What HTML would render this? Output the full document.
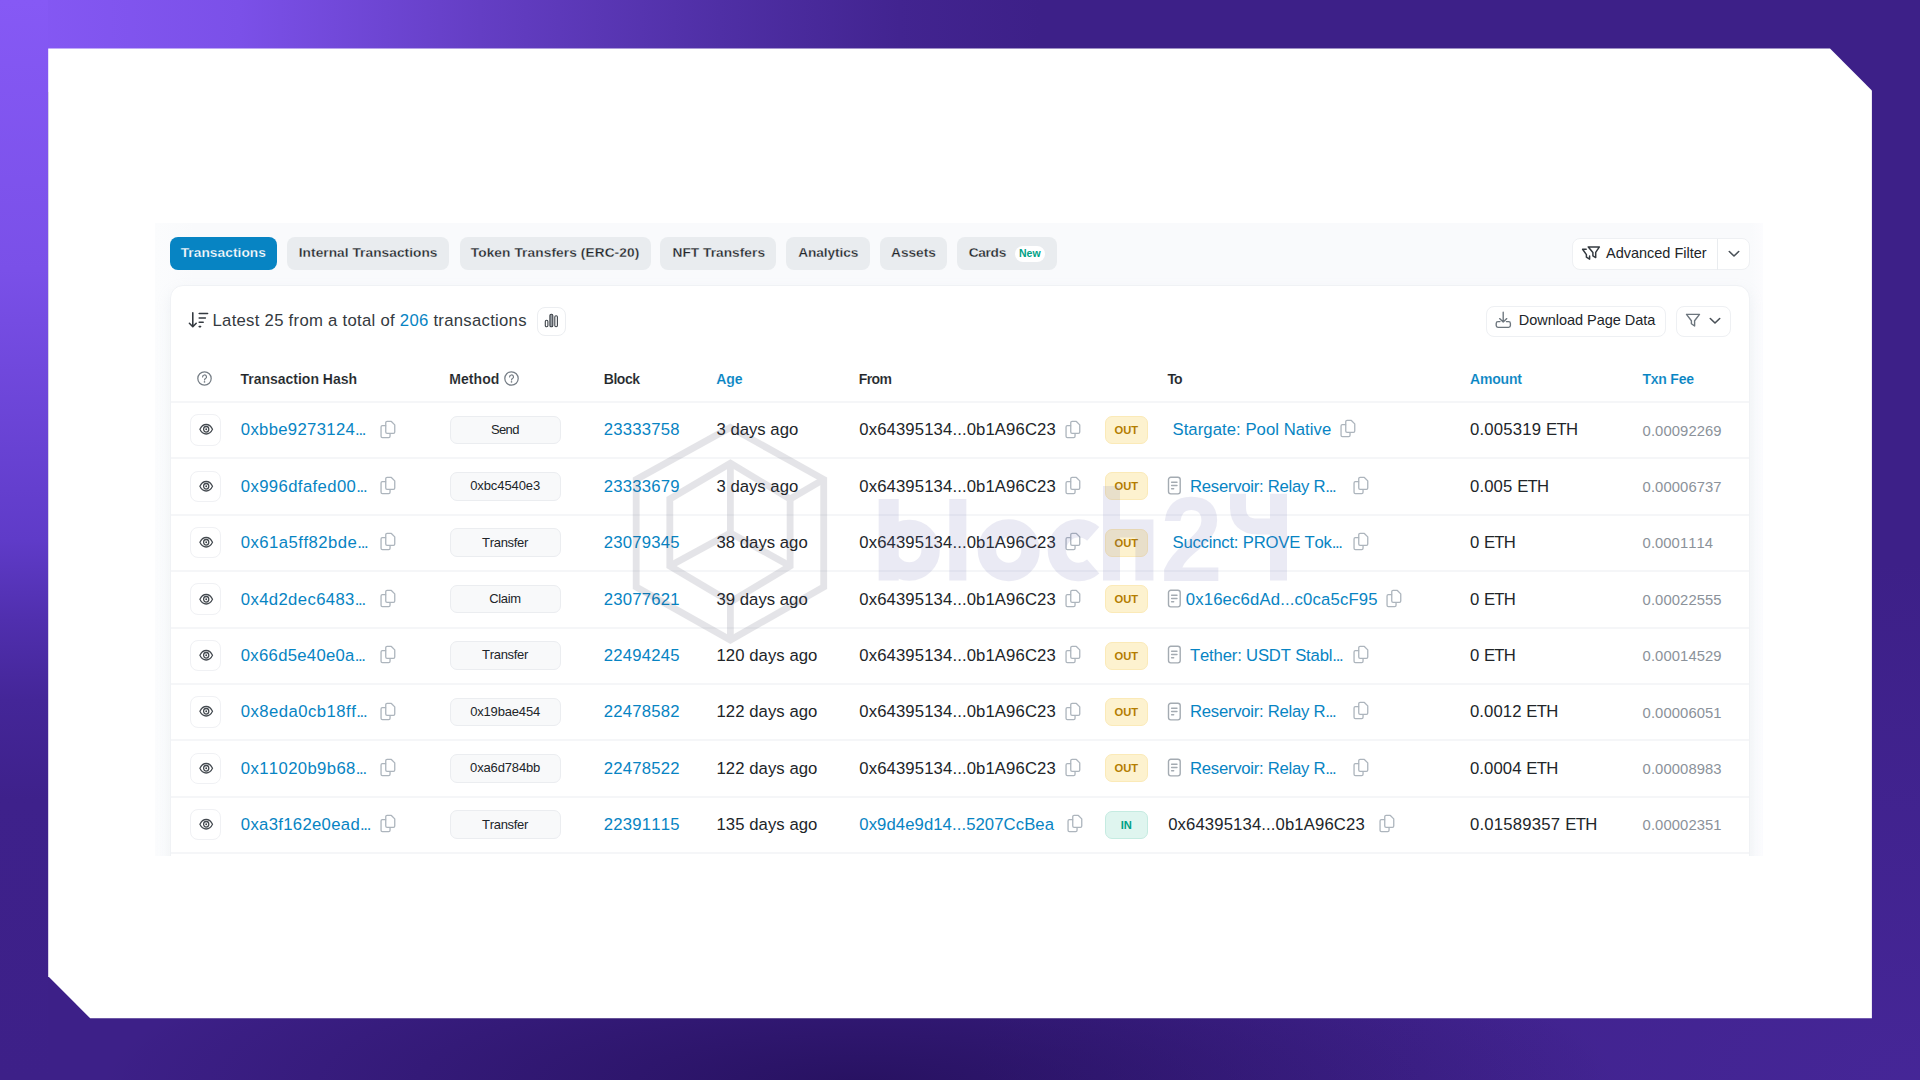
<!DOCTYPE html>
<html lang="en"><head><meta charset="utf-8"><title>Transactions</title>
<style>
*{box-sizing:border-box;margin:0;padding:0}
html,body{width:1920px;height:1080px;overflow:hidden;font-family:"Liberation Sans",sans-serif}
body{position:relative;font-family:"Liberation Sans",sans-serif;color:#212529;
 background:
  radial-gradient(ellipse 760px 170px at 860px 1085px, rgba(22,6,66,.55) 0%, rgba(22,6,66,0) 100%),
  radial-gradient(ellipse 950px 520px at 1920px 1080px, rgba(88,52,185,.30) 0%, rgba(88,52,185,0) 100%),
  linear-gradient(180deg, rgb(134,89,245) 0px, rgb(122,80,232) 270px, rgb(95,59,200) 540px, rgb(80,47,174) 620px, rgb(68,38,152) 700px, rgb(62,33,139) 800px, rgb(61,32,136) 1080px) 0 0 / 48px 1080px no-repeat,
  linear-gradient(90deg, rgb(134,89,245) 0px, rgb(123,80,232) 240px, rgb(100,62,196) 480px, rgb(79,47,165) 720px, rgb(66,36,144) 900px, rgb(61,32,136) 1040px) 0 0 / 1920px 92px no-repeat,
  #3d2088;}
.frame{position:absolute;left:0;top:0;width:1920px;height:1080px;background:#fff;
 clip-path:polygon(48.2px 48.5px,1830px 48.5px,1871.9px 90.4px,1871.9px 1018.3px,90.2px 1018.3px,48.2px 976.3px);}
.shot{position:absolute;left:155px;top:223px;width:1608px;height:633px;background:linear-gradient(90deg,#fbfcfd 0,#f9fafc 40px,#f9fafc 1596px,#fcfcfe 1608px);overflow:hidden}
.abs,.t,.h,.tab,.btn,.cp,.doc,.badge,.meth,.eyeb{position:absolute}
.t{font-size:16.7px;line-height:20px;white-space:nowrap;color:#212529;font-kerning:none}
.el{letter-spacing:-1.3px}.eth{letter-spacing:-.7px}
.a{color:#0784c3}
.h{font-size:14px;line-height:18px;font-weight:700;white-space:nowrap;color:#212529;-webkit-text-stroke:.12px #fff}
.h.a{color:#0784c3}
.tab{top:237.4px;height:32.8px;border-radius:8px;background:#e9ecef;font-size:13.7px;font-weight:700;line-height:33px;white-space:nowrap;color:#212529}
.tab span{position:absolute;top:0}
.tab.on{background:#0784c3;color:#fff}
.card{position:absolute;left:169.7px;top:285px;width:1580.3px;height:640px;background:#fff;border:1px solid #f0f2f5;border-radius:13px;box-shadow:0 6px 14px rgba(189,197,209,.18)}
.sep{position:absolute;left:171px;width:1578px;height:2px;background:#f5f6f8}
.btn{background:#fff;border:1px solid #eef0f3;border-radius:8px}
.bt{position:absolute;font-size:14.5px;line-height:18px;white-space:nowrap;color:#212529}
.cp{fill:none;stroke:#adb5bd;stroke-width:1.3;stroke-linejoin:round;stroke-linecap:round;overflow:visible}
.doc{fill:none;stroke:#a4abb2;stroke-width:1.4;stroke-linecap:round;overflow:visible}
.eyeb{left:189.5px;width:31.5px;height:31.5px;border:1px solid #f0f1f4;border-radius:8px;background:#fff}
.eye{position:absolute;left:8px;top:8.4px;fill:none;stroke:#454b51;stroke-width:1.4;overflow:visible}
.meth{left:449.5px;width:111.5px;height:28.5px;border:1px solid #ebedf0;border-radius:7px;background:#f8f9fa}
.mt{position:absolute;font-kerning:none;font-size:13px;line-height:16px;white-space:nowrap;color:#212529}
.badge{left:1105px;width:42.5px;height:28px;border-radius:7px;font-size:11.2px;font-weight:700;line-height:26px;text-align:center;letter-spacing:0}
.out{background:#fdf2cf;color:#b47d00;border:1px solid #fbeab8}
.in{background:#dff5ef;color:#00a186;border:1px solid #c5ebe1}
.fee{font-size:14.8px;color:#8b929a}
.q{position:absolute;fill:none;stroke:#767e86;stroke-width:1.25;overflow:visible}
.wm{position:absolute;left:0;top:0;width:1920px;height:1080px;pointer-events:none;opacity:.135}
.tabt{position:absolute;font-size:13.7px;font-weight:700;line-height:33px;white-space:nowrap;color:#212529;-webkit-text-stroke:.28px #e9ecef}.newt{position:absolute;font-size:10.5px;font-weight:700;line-height:16px;color:#00a186;white-space:nowrap}</style></head><body>
<div class="frame">
<div class="shot"></div>

<div class="tab on" style="left:169.5px;width:107.5px"></div>
<div class="tabt" style="left:180.70px;top:235.9px;color:#fff;-webkit-text-stroke:.25px #0784c3;letter-spacing:0.069px;">Transactions</div>
<div class="tab" style="left:287px;width:162.3px"></div>
<div class="tabt" style="left:298.75px;top:235.9px;letter-spacing:0.053px;">Internal Transactions</div>
<div class="tab" style="left:459.5px;width:191.5px"></div>
<div class="tabt" style="left:470.75px;top:235.9px;letter-spacing:0.094px;">Token Transfers (ERC-20)</div>
<div class="tab" style="left:660px;width:116.3px"></div>
<div class="tabt" style="left:672.50px;top:235.9px;letter-spacing:0.038px;">NFT Transfers</div>
<div class="tab" style="left:786.3px;width:83.7px"></div>
<div class="tabt" style="left:798.25px;top:235.9px;letter-spacing:-0.107px;">Analytics</div>
<div class="tab" style="left:880px;width:67px"></div>
<div class="tabt" style="left:891.00px;top:235.9px;letter-spacing:-0.001px;">Assets</div>
<div class="tab" style="left:957px;width:100px"></div>
<div class="tabt" style="left:968.75px;top:235.9px;letter-spacing:-0.324px;">Cards</div>
<div class="abs" style="left:1014.5px;top:245.5px;width:30.5px;height:16px;border-radius:8px;background:#fff"></div>
<div class="newt" style="left:1019.00px;top:244.7px;letter-spacing:0.003px;">New</div>
<div class="btn" style="left:1572.2px;top:238.4px;width:177.4px;height:31.4px"></div>
<div class="abs" style="left:1716.5px;top:239px;width:1px;height:30.5px;background:#e9ecef"></div>
<svg class="abs" style="left:1581px;top:244.5px;overflow:visible" width="20" height="16" viewBox="0 0 20 16" fill="none" stroke="#343a40" stroke-width="1.5" stroke-linejoin="round" stroke-linecap="round"><path d="M7.3 1.9H18.4L14.7 7.4V12.6L11.9 10.9V7.4Z"/><path d="M5.2 4.2H1.6L5.4 9.6V12.2L8.6 14.2V11"/></svg>
<div class="bt" style="left:1606.00px;top:243.5px;letter-spacing:-0.011px;">Advanced Filter</div>
<svg class="abs" style="left:1727.5px;top:249.5px" width="12" height="8" viewBox="0 0 12 8" fill="none" stroke="#495057" stroke-width="1.6" stroke-linecap="round" stroke-linejoin="round"><path d="M1.3 1.5L6 6L10.7 1.5"/></svg>
<div class="card"></div>
<svg class="abs" style="left:188px;top:311px" width="22" height="18" viewBox="0 0 22 18" fill="none" stroke="#343a40" stroke-width="1.55" stroke-linecap="round" stroke-linejoin="round"><path d="M4.8 1.8V15.6M1.4 12.2L4.8 15.8L8.2 12.2"/><path d="M11.2 2.4H19.6M11.2 6.9H17.4M11.2 11.3H15.2M11.2 15.6H12.6"/></svg>
<div class="t" style="left:212.50px;top:311.1px;color:#343a40;letter-spacing:0.283px;">Latest 25 from a total of <span class="a">206</span> transactions</div>
<div class="btn" style="left:536.5px;top:306.5px;width:29px;height:29px;border-color:#eceef1"></div>
<svg class="abs" style="left:543.5px;top:312.5px" width="15" height="15" viewBox="0 0 15 15" fill="#9aa0a6" stroke="#3c4248" stroke-width="1.1"><rect x="1.3" y="7.3" width="2.6" height="6.4" rx="1.2" fill="none"/><rect x="5.9" y="1.3" width="2.9" height="12.4" rx="1.3"/><rect x="10.8" y="2.8" width="2.6" height="10.9" rx="1.2" fill="none"/></svg>
<div class="btn" style="left:1485.5px;top:305.5px;width:180px;height:31px"></div>
<svg class="abs" style="left:1494.5px;top:311px;overflow:visible" width="17" height="18" viewBox="0 0 17 18" fill="none" stroke="#6c757d" stroke-width="1.35" stroke-linecap="round" stroke-linejoin="round"><path d="M8.2 1.2V11M4.6 7.6L8.2 11.1L11.8 7.6"/><path d="M5 10.6H3a1.8 1.8 0 0 0-1.8 1.8v2.2a1.8 1.8 0 0 0 1.8 1.8h10.6a1.8 1.8 0 0 0 1.8-1.8v-2.2a1.8 1.8 0 0 0-1.8-1.8h-2.2"/></svg>
<div class="bt" style="left:1518.80px;top:311.0px;letter-spacing:-0.032px;">Download Page Data</div>
<div class="btn" style="left:1675.5px;top:305.5px;width:55px;height:31px"></div>
<svg class="abs" style="left:1685px;top:312.5px;overflow:visible" width="16" height="14" viewBox="0 0 16 14" fill="none" stroke="#6c757d" stroke-width="1.4" stroke-linejoin="round" stroke-linecap="round"><path d="M1.5 1.4H14.5L9.6 7.7V13L6.4 10.7V7.7Z"/></svg>
<svg class="abs" style="left:1708.8px;top:316.5px" width="12" height="8" viewBox="0 0 12 8" fill="none" stroke="#495057" stroke-width="1.6" stroke-linecap="round" stroke-linejoin="round"><path d="M1.3 1.5L6 6L10.7 1.5"/></svg>
<svg class="q" style="left:197.3px;top:370.5px" width="15" height="15" viewBox="0 0 15 15"><circle cx="7.5" cy="7.5" r="6.7"/><path d="M5.6 5.9a1.95 1.95 0 1 1 2.9 1.7c-.6.35-.95.7-.95 1.4" stroke-width="1.2" stroke-linecap="round"/><circle cx="7.5" cy="10.9" r=".8" fill="#767e86" stroke="none"/></svg>
<div class="h" style="left:240.50px;top:369.9px;letter-spacing:-0.014px;">Transaction Hash</div>
<div class="h" style="left:449.30px;top:369.9px;letter-spacing:0.047px;">Method</div>
<div class="h" style="left:603.80px;top:369.9px;letter-spacing:-0.469px;">Block</div>
<div class="h a" style="left:716.30px;top:369.9px;letter-spacing:-0.102px;">Age</div>
<div class="h" style="left:858.70px;top:369.9px;letter-spacing:-0.583px;">From</div>
<div class="h" style="left:1167.50px;top:369.9px;letter-spacing:-1.078px;">To</div>
<div class="h a" style="left:1470.00px;top:369.9px;letter-spacing:-0.178px;">Amount</div>
<div class="h a" style="left:1642.50px;top:369.9px;letter-spacing:-0.234px;">Txn Fee</div>
<svg class="q" style="left:503.8px;top:370.7px" width="15" height="15" viewBox="0 0 15 15"><circle cx="7.5" cy="7.5" r="6.7"/><path d="M5.6 5.9a1.95 1.95 0 1 1 2.9 1.7c-.6.35-.95.7-.95 1.4" stroke-width="1.2" stroke-linecap="round"/><circle cx="7.5" cy="10.9" r=".8" fill="#767e86" stroke="none"/></svg>
<div class="sep" style="top:401px"></div>
<div class="sep" style="top:457px"></div>
<div class="sep" style="top:514px"></div>
<div class="sep" style="top:570px"></div>
<div class="sep" style="top:627px"></div>
<div class="sep" style="top:683px"></div>
<div class="sep" style="top:739px"></div>
<div class="sep" style="top:796px"></div>
<div class="sep" style="top:852px"></div>
<div class="eyeb" style="top:414.1px"><svg class="eye" width="14.4" height="12.6" viewBox="0 0 16 13" preserveAspectRatio="none"><path d="M1 6.5C2.6 3.3 5.1 1.6 8 1.6s5.4 1.7 7 4.9c-1.6 3.2-4.1 4.9-7 4.9S2.6 9.7 1 6.5z"/><circle cx="8" cy="6.5" r="2.9"/><circle cx="8" cy="6.5" r="1" fill="#3c4248" stroke="none"/></svg></div>
<div class="t a" style="left:240.80px;top:420.3px;letter-spacing:0.322px;">0xbbe9273124<span class="el">...</span></div>
<svg class="cp" style="left:379.9px;top:419.6px" width="17" height="20" viewBox="0 0 17 20"><path d="M5.75 2.75a1.3 1.3 0 0 1 1.3-1.3h4.3l3.4 3.4v7.2a1.3 1.3 0 0 1-1.3 1.3h-6.4a1.3 1.3 0 0 1-1.3-1.3z"/><path d="M5.6 5.65H2.35a1.3 1.3 0 0 0-1.3 1.3v9.3a1.3 1.3 0 0 0 1.3 1.3h6.4a1.3 1.3 0 0 0 1.3-1.3v-2.7"/></svg>
<div class="meth" style="top:415.6px"></div>
<div class="mt" style="left:490.95px;top:421.8px;letter-spacing:-0.625px;">Send</div>
<div class="t a" style="left:603.75px;top:420.3px;letter-spacing:0.214px;">23333758</div>
<div class="t" style="left:716.50px;top:420.3px;letter-spacing:0.010px;">3 days ago</div>
<div class="t" style="left:859.30px;top:420.3px;letter-spacing:0.122px;">0x64395134...0b1A96C23</div>
<svg class="cp" style="left:1064.8px;top:419.6px" width="17" height="20" viewBox="0 0 17 20"><path d="M5.75 2.75a1.3 1.3 0 0 1 1.3-1.3h4.3l3.4 3.4v7.2a1.3 1.3 0 0 1-1.3 1.3h-6.4a1.3 1.3 0 0 1-1.3-1.3z"/><path d="M5.6 5.65H2.35a1.3 1.3 0 0 0-1.3 1.3v9.3a1.3 1.3 0 0 0 1.3 1.3h6.4a1.3 1.3 0 0 0 1.3-1.3v-2.7"/></svg>
<div class="badge out" style="top:416.0px">OUT</div>
<div class="t a" style="left:1172.50px;top:420.3px;letter-spacing:0.052px;">Stargate: Pool Native</div>
<svg class="cp" style="left:1339.9px;top:419.4px" width="17" height="20" viewBox="0 0 17 20"><path d="M5.75 2.75a1.3 1.3 0 0 1 1.3-1.3h4.3l3.4 3.4v7.2a1.3 1.3 0 0 1-1.3 1.3h-6.4a1.3 1.3 0 0 1-1.3-1.3z"/><path d="M5.6 5.65H2.35a1.3 1.3 0 0 0-1.3 1.3v9.3a1.3 1.3 0 0 0 1.3 1.3h6.4a1.3 1.3 0 0 0 1.3-1.3v-2.7"/></svg>
<div class="t" style="left:1470.00px;top:420.3px;letter-spacing:0.191px;">0.005319 <span class="eth">ETH</span></div>
<div class="t fee" style="left:1642.60px;top:420.5px;letter-spacing:0.090px;">0.00092269</div>
<div class="eyeb" style="top:470.5px"><svg class="eye" width="14.4" height="12.6" viewBox="0 0 16 13" preserveAspectRatio="none"><path d="M1 6.5C2.6 3.3 5.1 1.6 8 1.6s5.4 1.7 7 4.9c-1.6 3.2-4.1 4.9-7 4.9S2.6 9.7 1 6.5z"/><circle cx="8" cy="6.5" r="2.9"/><circle cx="8" cy="6.5" r="1" fill="#3c4248" stroke="none"/></svg></div>
<div class="t a" style="left:240.80px;top:476.7px;letter-spacing:0.387px;">0x996dfafed00<span class="el">...</span></div>
<svg class="cp" style="left:379.9px;top:476.0px" width="17" height="20" viewBox="0 0 17 20"><path d="M5.75 2.75a1.3 1.3 0 0 1 1.3-1.3h4.3l3.4 3.4v7.2a1.3 1.3 0 0 1-1.3 1.3h-6.4a1.3 1.3 0 0 1-1.3-1.3z"/><path d="M5.6 5.65H2.35a1.3 1.3 0 0 0-1.3 1.3v9.3a1.3 1.3 0 0 0 1.3 1.3h6.4a1.3 1.3 0 0 0 1.3-1.3v-2.7"/></svg>
<div class="meth" style="top:472.0px"></div>
<div class="mt" style="left:470.20px;top:478.2px;letter-spacing:-0.094px;">0xbc4540e3</div>
<div class="t a" style="left:603.75px;top:476.7px;letter-spacing:0.214px;">23333679</div>
<div class="t" style="left:716.50px;top:476.7px;letter-spacing:0.010px;">3 days ago</div>
<div class="t" style="left:859.30px;top:476.7px;letter-spacing:0.122px;">0x64395134...0b1A96C23</div>
<svg class="cp" style="left:1064.8px;top:476.0px" width="17" height="20" viewBox="0 0 17 20"><path d="M5.75 2.75a1.3 1.3 0 0 1 1.3-1.3h4.3l3.4 3.4v7.2a1.3 1.3 0 0 1-1.3 1.3h-6.4a1.3 1.3 0 0 1-1.3-1.3z"/><path d="M5.6 5.65H2.35a1.3 1.3 0 0 0-1.3 1.3v9.3a1.3 1.3 0 0 0 1.3 1.3h6.4a1.3 1.3 0 0 0 1.3-1.3v-2.7"/></svg>
<div class="badge out" style="top:472.4px">OUT</div>
<svg class="doc" style="left:1166.6px;top:475.9px" width="15" height="20" viewBox="0 0 15 20"><rect x="1.5" y="1.3" width="11.7" height="16.6" rx="2.3"/><path d="M4.6 6.3h5.4M4.6 9.5h5.4M4.6 12.8h2.1"/></svg>
<div class="t a" style="left:1190.00px;top:476.7px;letter-spacing:-0.262px;">Reservoir: Relay R<span class="el">...</span></div>
<svg class="cp" style="left:1353.1px;top:475.8px" width="17" height="20" viewBox="0 0 17 20"><path d="M5.75 2.75a1.3 1.3 0 0 1 1.3-1.3h4.3l3.4 3.4v7.2a1.3 1.3 0 0 1-1.3 1.3h-6.4a1.3 1.3 0 0 1-1.3-1.3z"/><path d="M5.6 5.65H2.35a1.3 1.3 0 0 0-1.3 1.3v9.3a1.3 1.3 0 0 0 1.3 1.3h6.4a1.3 1.3 0 0 0 1.3-1.3v-2.7"/></svg>
<div class="t" style="left:1470.00px;top:476.7px;letter-spacing:0.119px;">0.005 <span class="eth">ETH</span></div>
<div class="t fee" style="left:1642.60px;top:476.9px;letter-spacing:0.090px;">0.00006737</div>
<div class="eyeb" style="top:526.9px"><svg class="eye" width="14.4" height="12.6" viewBox="0 0 16 13" preserveAspectRatio="none"><path d="M1 6.5C2.6 3.3 5.1 1.6 8 1.6s5.4 1.7 7 4.9c-1.6 3.2-4.1 4.9-7 4.9S2.6 9.7 1 6.5z"/><circle cx="8" cy="6.5" r="2.9"/><circle cx="8" cy="6.5" r="1" fill="#3c4248" stroke="none"/></svg></div>
<div class="t a" style="left:240.80px;top:533.1px;letter-spacing:0.471px;">0x61a5ff82bde<span class="el">...</span></div>
<svg class="cp" style="left:379.9px;top:532.4px" width="17" height="20" viewBox="0 0 17 20"><path d="M5.75 2.75a1.3 1.3 0 0 1 1.3-1.3h4.3l3.4 3.4v7.2a1.3 1.3 0 0 1-1.3 1.3h-6.4a1.3 1.3 0 0 1-1.3-1.3z"/><path d="M5.6 5.65H2.35a1.3 1.3 0 0 0-1.3 1.3v9.3a1.3 1.3 0 0 0 1.3 1.3h6.4a1.3 1.3 0 0 0 1.3-1.3v-2.7"/></svg>
<div class="meth" style="top:528.4px"></div>
<div class="mt" style="left:482.05px;top:534.6px;letter-spacing:-0.301px;">Transfer</div>
<div class="t a" style="left:603.75px;top:533.1px;letter-spacing:0.214px;">23079345</div>
<div class="t" style="left:716.50px;top:533.1px;letter-spacing:0.026px;">38 days ago</div>
<div class="t" style="left:859.30px;top:533.1px;letter-spacing:0.122px;">0x64395134...0b1A96C23</div>
<svg class="cp" style="left:1064.8px;top:532.4px" width="17" height="20" viewBox="0 0 17 20"><path d="M5.75 2.75a1.3 1.3 0 0 1 1.3-1.3h4.3l3.4 3.4v7.2a1.3 1.3 0 0 1-1.3 1.3h-6.4a1.3 1.3 0 0 1-1.3-1.3z"/><path d="M5.6 5.65H2.35a1.3 1.3 0 0 0-1.3 1.3v9.3a1.3 1.3 0 0 0 1.3 1.3h6.4a1.3 1.3 0 0 0 1.3-1.3v-2.7"/></svg>
<div class="badge out" style="top:528.8px">OUT</div>
<div class="t a" style="left:1172.50px;top:533.1px;letter-spacing:-0.213px;">Succinct: PROVE Tok<span class="el">...</span></div>
<svg class="cp" style="left:1353.1px;top:532.2px" width="17" height="20" viewBox="0 0 17 20"><path d="M5.75 2.75a1.3 1.3 0 0 1 1.3-1.3h4.3l3.4 3.4v7.2a1.3 1.3 0 0 1-1.3 1.3h-6.4a1.3 1.3 0 0 1-1.3-1.3z"/><path d="M5.6 5.65H2.35a1.3 1.3 0 0 0-1.3 1.3v9.3a1.3 1.3 0 0 0 1.3 1.3h6.4a1.3 1.3 0 0 0 1.3-1.3v-2.7"/></svg>
<div class="t" style="left:1470.00px;top:533.1px;letter-spacing:-0.002px;">0 <span class="eth">ETH</span></div>
<div class="t fee" style="left:1642.60px;top:533.3px;letter-spacing:0.056px;">0.0001114</div>
<div class="eyeb" style="top:583.3px"><svg class="eye" width="14.4" height="12.6" viewBox="0 0 16 13" preserveAspectRatio="none"><path d="M1 6.5C2.6 3.3 5.1 1.6 8 1.6s5.4 1.7 7 4.9c-1.6 3.2-4.1 4.9-7 4.9S2.6 9.7 1 6.5z"/><circle cx="8" cy="6.5" r="2.9"/><circle cx="8" cy="6.5" r="1" fill="#3c4248" stroke="none"/></svg></div>
<div class="t a" style="left:240.80px;top:589.5px;letter-spacing:0.371px;">0x4d2dec6483<span class="el">...</span></div>
<svg class="cp" style="left:379.9px;top:588.8px" width="17" height="20" viewBox="0 0 17 20"><path d="M5.75 2.75a1.3 1.3 0 0 1 1.3-1.3h4.3l3.4 3.4v7.2a1.3 1.3 0 0 1-1.3 1.3h-6.4a1.3 1.3 0 0 1-1.3-1.3z"/><path d="M5.6 5.65H2.35a1.3 1.3 0 0 0-1.3 1.3v9.3a1.3 1.3 0 0 0 1.3 1.3h6.4a1.3 1.3 0 0 0 1.3-1.3v-2.7"/></svg>
<div class="meth" style="top:584.8px"></div>
<div class="mt" style="left:489.20px;top:591.0px;letter-spacing:-0.309px;">Claim</div>
<div class="t a" style="left:603.75px;top:589.5px;letter-spacing:0.214px;">23077621</div>
<div class="t" style="left:716.50px;top:589.5px;letter-spacing:0.026px;">39 days ago</div>
<div class="t" style="left:859.30px;top:589.5px;letter-spacing:0.122px;">0x64395134...0b1A96C23</div>
<svg class="cp" style="left:1064.8px;top:588.8px" width="17" height="20" viewBox="0 0 17 20"><path d="M5.75 2.75a1.3 1.3 0 0 1 1.3-1.3h4.3l3.4 3.4v7.2a1.3 1.3 0 0 1-1.3 1.3h-6.4a1.3 1.3 0 0 1-1.3-1.3z"/><path d="M5.6 5.65H2.35a1.3 1.3 0 0 0-1.3 1.3v9.3a1.3 1.3 0 0 0 1.3 1.3h6.4a1.3 1.3 0 0 0 1.3-1.3v-2.7"/></svg>
<div class="badge out" style="top:585.2px">OUT</div>
<svg class="doc" style="left:1166.6px;top:588.7px" width="15" height="20" viewBox="0 0 15 20"><rect x="1.5" y="1.3" width="11.7" height="16.6" rx="2.3"/><path d="M4.6 6.3h5.4M4.6 9.5h5.4M4.6 12.8h2.1"/></svg>
<div class="t a" style="left:1185.75px;top:589.5px;letter-spacing:0.163px;">0x16ec6dAd...c0ca5cF95</div>
<svg class="cp" style="left:1385.7px;top:588.6px" width="17" height="20" viewBox="0 0 17 20"><path d="M5.75 2.75a1.3 1.3 0 0 1 1.3-1.3h4.3l3.4 3.4v7.2a1.3 1.3 0 0 1-1.3 1.3h-6.4a1.3 1.3 0 0 1-1.3-1.3z"/><path d="M5.6 5.65H2.35a1.3 1.3 0 0 0-1.3 1.3v9.3a1.3 1.3 0 0 0 1.3 1.3h6.4a1.3 1.3 0 0 0 1.3-1.3v-2.7"/></svg>
<div class="t" style="left:1470.00px;top:589.5px;letter-spacing:-0.002px;">0 <span class="eth">ETH</span></div>
<div class="t fee" style="left:1642.60px;top:589.7px;letter-spacing:0.090px;">0.00022555</div>
<div class="eyeb" style="top:639.7px"><svg class="eye" width="14.4" height="12.6" viewBox="0 0 16 13" preserveAspectRatio="none"><path d="M1 6.5C2.6 3.3 5.1 1.6 8 1.6s5.4 1.7 7 4.9c-1.6 3.2-4.1 4.9-7 4.9S2.6 9.7 1 6.5z"/><circle cx="8" cy="6.5" r="2.9"/><circle cx="8" cy="6.5" r="1" fill="#3c4248" stroke="none"/></svg></div>
<div class="t a" style="left:240.80px;top:645.9px;letter-spacing:0.286px;">0x66d5e40e0a<span class="el">...</span></div>
<svg class="cp" style="left:379.9px;top:645.2px" width="17" height="20" viewBox="0 0 17 20"><path d="M5.75 2.75a1.3 1.3 0 0 1 1.3-1.3h4.3l3.4 3.4v7.2a1.3 1.3 0 0 1-1.3 1.3h-6.4a1.3 1.3 0 0 1-1.3-1.3z"/><path d="M5.6 5.65H2.35a1.3 1.3 0 0 0-1.3 1.3v9.3a1.3 1.3 0 0 0 1.3 1.3h6.4a1.3 1.3 0 0 0 1.3-1.3v-2.7"/></svg>
<div class="meth" style="top:641.2px"></div>
<div class="mt" style="left:482.05px;top:647.4px;letter-spacing:-0.301px;">Transfer</div>
<div class="t a" style="left:603.75px;top:645.9px;letter-spacing:0.214px;">22494245</div>
<div class="t" style="left:716.50px;top:645.9px;letter-spacing:0.062px;">120 days ago</div>
<div class="t" style="left:859.30px;top:645.9px;letter-spacing:0.122px;">0x64395134...0b1A96C23</div>
<svg class="cp" style="left:1064.8px;top:645.2px" width="17" height="20" viewBox="0 0 17 20"><path d="M5.75 2.75a1.3 1.3 0 0 1 1.3-1.3h4.3l3.4 3.4v7.2a1.3 1.3 0 0 1-1.3 1.3h-6.4a1.3 1.3 0 0 1-1.3-1.3z"/><path d="M5.6 5.65H2.35a1.3 1.3 0 0 0-1.3 1.3v9.3a1.3 1.3 0 0 0 1.3 1.3h6.4a1.3 1.3 0 0 0 1.3-1.3v-2.7"/></svg>
<div class="badge out" style="top:641.6px">OUT</div>
<svg class="doc" style="left:1166.6px;top:645.1px" width="15" height="20" viewBox="0 0 15 20"><rect x="1.5" y="1.3" width="11.7" height="16.6" rx="2.3"/><path d="M4.6 6.3h5.4M4.6 9.5h5.4M4.6 12.8h2.1"/></svg>
<div class="t a" style="left:1190.00px;top:645.9px;letter-spacing:-0.184px;">Tether: USDT Stabl<span class="el">...</span></div>
<svg class="cp" style="left:1353.1px;top:645.0px" width="17" height="20" viewBox="0 0 17 20"><path d="M5.75 2.75a1.3 1.3 0 0 1 1.3-1.3h4.3l3.4 3.4v7.2a1.3 1.3 0 0 1-1.3 1.3h-6.4a1.3 1.3 0 0 1-1.3-1.3z"/><path d="M5.6 5.65H2.35a1.3 1.3 0 0 0-1.3 1.3v9.3a1.3 1.3 0 0 0 1.3 1.3h6.4a1.3 1.3 0 0 0 1.3-1.3v-2.7"/></svg>
<div class="t" style="left:1470.00px;top:645.9px;letter-spacing:-0.002px;">0 <span class="eth">ETH</span></div>
<div class="t fee" style="left:1642.60px;top:646.1px;letter-spacing:0.090px;">0.00014529</div>
<div class="eyeb" style="top:696.1px"><svg class="eye" width="14.4" height="12.6" viewBox="0 0 16 13" preserveAspectRatio="none"><path d="M1 6.5C2.6 3.3 5.1 1.6 8 1.6s5.4 1.7 7 4.9c-1.6 3.2-4.1 4.9-7 4.9S2.6 9.7 1 6.5z"/><circle cx="8" cy="6.5" r="2.9"/><circle cx="8" cy="6.5" r="1" fill="#3c4248" stroke="none"/></svg></div>
<div class="t a" style="left:240.80px;top:702.3px;letter-spacing:0.457px;">0x8eda0cb18ff<span class="el">...</span></div>
<svg class="cp" style="left:379.9px;top:701.6px" width="17" height="20" viewBox="0 0 17 20"><path d="M5.75 2.75a1.3 1.3 0 0 1 1.3-1.3h4.3l3.4 3.4v7.2a1.3 1.3 0 0 1-1.3 1.3h-6.4a1.3 1.3 0 0 1-1.3-1.3z"/><path d="M5.6 5.65H2.35a1.3 1.3 0 0 0-1.3 1.3v9.3a1.3 1.3 0 0 0 1.3 1.3h6.4a1.3 1.3 0 0 0 1.3-1.3v-2.7"/></svg>
<div class="meth" style="top:697.6px"></div>
<div class="mt" style="left:470.20px;top:703.8px;letter-spacing:-0.175px;">0x19bae454</div>
<div class="t a" style="left:603.75px;top:702.3px;letter-spacing:0.214px;">22478582</div>
<div class="t" style="left:716.50px;top:702.3px;letter-spacing:0.062px;">122 days ago</div>
<div class="t" style="left:859.30px;top:702.3px;letter-spacing:0.122px;">0x64395134...0b1A96C23</div>
<svg class="cp" style="left:1064.8px;top:701.6px" width="17" height="20" viewBox="0 0 17 20"><path d="M5.75 2.75a1.3 1.3 0 0 1 1.3-1.3h4.3l3.4 3.4v7.2a1.3 1.3 0 0 1-1.3 1.3h-6.4a1.3 1.3 0 0 1-1.3-1.3z"/><path d="M5.6 5.65H2.35a1.3 1.3 0 0 0-1.3 1.3v9.3a1.3 1.3 0 0 0 1.3 1.3h6.4a1.3 1.3 0 0 0 1.3-1.3v-2.7"/></svg>
<div class="badge out" style="top:698.0px">OUT</div>
<svg class="doc" style="left:1166.6px;top:701.5px" width="15" height="20" viewBox="0 0 15 20"><rect x="1.5" y="1.3" width="11.7" height="16.6" rx="2.3"/><path d="M4.6 6.3h5.4M4.6 9.5h5.4M4.6 12.8h2.1"/></svg>
<div class="t a" style="left:1190.00px;top:702.3px;letter-spacing:-0.262px;">Reservoir: Relay R<span class="el">...</span></div>
<svg class="cp" style="left:1353.1px;top:701.4px" width="17" height="20" viewBox="0 0 17 20"><path d="M5.75 2.75a1.3 1.3 0 0 1 1.3-1.3h4.3l3.4 3.4v7.2a1.3 1.3 0 0 1-1.3 1.3h-6.4a1.3 1.3 0 0 1-1.3-1.3z"/><path d="M5.6 5.65H2.35a1.3 1.3 0 0 0-1.3 1.3v9.3a1.3 1.3 0 0 0 1.3 1.3h6.4a1.3 1.3 0 0 0 1.3-1.3v-2.7"/></svg>
<div class="t" style="left:1470.00px;top:702.3px;letter-spacing:0.076px;">0.0012 <span class="eth">ETH</span></div>
<div class="t fee" style="left:1642.60px;top:702.5px;letter-spacing:0.090px;">0.00006051</div>
<div class="eyeb" style="top:752.5px"><svg class="eye" width="14.4" height="12.6" viewBox="0 0 16 13" preserveAspectRatio="none"><path d="M1 6.5C2.6 3.3 5.1 1.6 8 1.6s5.4 1.7 7 4.9c-1.6 3.2-4.1 4.9-7 4.9S2.6 9.7 1 6.5z"/><circle cx="8" cy="6.5" r="2.9"/><circle cx="8" cy="6.5" r="1" fill="#3c4248" stroke="none"/></svg></div>
<div class="t a" style="left:240.80px;top:758.7px;letter-spacing:0.377px;">0x11020b9b68<span class="el">...</span></div>
<svg class="cp" style="left:379.9px;top:758.0px" width="17" height="20" viewBox="0 0 17 20"><path d="M5.75 2.75a1.3 1.3 0 0 1 1.3-1.3h4.3l3.4 3.4v7.2a1.3 1.3 0 0 1-1.3 1.3h-6.4a1.3 1.3 0 0 1-1.3-1.3z"/><path d="M5.6 5.65H2.35a1.3 1.3 0 0 0-1.3 1.3v9.3a1.3 1.3 0 0 0 1.3 1.3h6.4a1.3 1.3 0 0 0 1.3-1.3v-2.7"/></svg>
<div class="meth" style="top:754.0px"></div>
<div class="mt" style="left:470.05px;top:760.2px;letter-spacing:-0.142px;">0xa6d784bb</div>
<div class="t a" style="left:603.75px;top:758.7px;letter-spacing:0.214px;">22478522</div>
<div class="t" style="left:716.50px;top:758.7px;letter-spacing:0.062px;">122 days ago</div>
<div class="t" style="left:859.30px;top:758.7px;letter-spacing:0.122px;">0x64395134...0b1A96C23</div>
<svg class="cp" style="left:1064.8px;top:758.0px" width="17" height="20" viewBox="0 0 17 20"><path d="M5.75 2.75a1.3 1.3 0 0 1 1.3-1.3h4.3l3.4 3.4v7.2a1.3 1.3 0 0 1-1.3 1.3h-6.4a1.3 1.3 0 0 1-1.3-1.3z"/><path d="M5.6 5.65H2.35a1.3 1.3 0 0 0-1.3 1.3v9.3a1.3 1.3 0 0 0 1.3 1.3h6.4a1.3 1.3 0 0 0 1.3-1.3v-2.7"/></svg>
<div class="badge out" style="top:754.4px">OUT</div>
<svg class="doc" style="left:1166.6px;top:757.9px" width="15" height="20" viewBox="0 0 15 20"><rect x="1.5" y="1.3" width="11.7" height="16.6" rx="2.3"/><path d="M4.6 6.3h5.4M4.6 9.5h5.4M4.6 12.8h2.1"/></svg>
<div class="t a" style="left:1190.00px;top:758.7px;letter-spacing:-0.262px;">Reservoir: Relay R<span class="el">...</span></div>
<svg class="cp" style="left:1353.1px;top:757.8px" width="17" height="20" viewBox="0 0 17 20"><path d="M5.75 2.75a1.3 1.3 0 0 1 1.3-1.3h4.3l3.4 3.4v7.2a1.3 1.3 0 0 1-1.3 1.3h-6.4a1.3 1.3 0 0 1-1.3-1.3z"/><path d="M5.6 5.65H2.35a1.3 1.3 0 0 0-1.3 1.3v9.3a1.3 1.3 0 0 0 1.3 1.3h6.4a1.3 1.3 0 0 0 1.3-1.3v-2.7"/></svg>
<div class="t" style="left:1470.00px;top:758.7px;letter-spacing:0.076px;">0.0004 <span class="eth">ETH</span></div>
<div class="t fee" style="left:1642.60px;top:758.9px;letter-spacing:0.090px;">0.00008983</div>
<div class="eyeb" style="top:808.9px"><svg class="eye" width="14.4" height="12.6" viewBox="0 0 16 13" preserveAspectRatio="none"><path d="M1 6.5C2.6 3.3 5.1 1.6 8 1.6s5.4 1.7 7 4.9c-1.6 3.2-4.1 4.9-7 4.9S2.6 9.7 1 6.5z"/><circle cx="8" cy="6.5" r="2.9"/><circle cx="8" cy="6.5" r="1" fill="#3c4248" stroke="none"/></svg></div>
<div class="t a" style="left:240.80px;top:815.1px;letter-spacing:0.317px;">0xa3f162e0ead<span class="el">...</span></div>
<svg class="cp" style="left:379.9px;top:814.4px" width="17" height="20" viewBox="0 0 17 20"><path d="M5.75 2.75a1.3 1.3 0 0 1 1.3-1.3h4.3l3.4 3.4v7.2a1.3 1.3 0 0 1-1.3 1.3h-6.4a1.3 1.3 0 0 1-1.3-1.3z"/><path d="M5.6 5.65H2.35a1.3 1.3 0 0 0-1.3 1.3v9.3a1.3 1.3 0 0 0 1.3 1.3h6.4a1.3 1.3 0 0 0 1.3-1.3v-2.7"/></svg>
<div class="meth" style="top:810.4px"></div>
<div class="mt" style="left:482.05px;top:816.6px;letter-spacing:-0.301px;">Transfer</div>
<div class="t a" style="left:603.75px;top:815.1px;letter-spacing:0.214px;">22391115</div>
<div class="t" style="left:716.50px;top:815.1px;letter-spacing:0.062px;">135 days ago</div>
<div class="t a" style="left:859.30px;top:815.1px;letter-spacing:0.081px;">0x9d4e9d14...5207CcBea</div>
<svg class="cp" style="left:1067.2px;top:814.4px" width="17" height="20" viewBox="0 0 17 20"><path d="M5.75 2.75a1.3 1.3 0 0 1 1.3-1.3h4.3l3.4 3.4v7.2a1.3 1.3 0 0 1-1.3 1.3h-6.4a1.3 1.3 0 0 1-1.3-1.3z"/><path d="M5.6 5.65H2.35a1.3 1.3 0 0 0-1.3 1.3v9.3a1.3 1.3 0 0 0 1.3 1.3h6.4a1.3 1.3 0 0 0 1.3-1.3v-2.7"/></svg>
<div class="badge in" style="top:810.8px">IN</div>
<div class="t" style="left:1168.20px;top:815.1px;letter-spacing:0.122px;">0x64395134...0b1A96C23</div>
<svg class="cp" style="left:1378.5px;top:814.2px" width="17" height="20" viewBox="0 0 17 20"><path d="M5.75 2.75a1.3 1.3 0 0 1 1.3-1.3h4.3l3.4 3.4v7.2a1.3 1.3 0 0 1-1.3 1.3h-6.4a1.3 1.3 0 0 1-1.3-1.3z"/><path d="M5.6 5.65H2.35a1.3 1.3 0 0 0-1.3 1.3v9.3a1.3 1.3 0 0 0 1.3 1.3h6.4a1.3 1.3 0 0 0 1.3-1.3v-2.7"/></svg>
<div class="t" style="left:1470.00px;top:815.1px;letter-spacing:0.219px;">0.01589357 <span class="eth">ETH</span></div>
<div class="t fee" style="left:1642.60px;top:815.3px;letter-spacing:0.090px;">0.00002351</div>
<div class="abs" style="left:140px;top:856px;width:1640px;height:120px;background:#fff"></div>
<svg class="wm" viewBox="0 0 1920 1080"><g fill="none" stroke="#404058" stroke-width="6.8" stroke-linejoin="miter">
<path d="M730.4 427.4L823.7 479.4V587L730.4 640L636.2 587V479.4Z"/>
<path d="M730.4 463.2L790.1 499V566L730.4 602L669.8 566V499Z"/>
<path d="M730.4 463.2V533L669.8 566M730.4 533L790.1 566M730.4 602V640M790.1 499L823.7 479.4"/>
</g><g fill="none" stroke="#6a6ab0" stroke-linecap="butt">
<path d="M888.7 499V580.6" stroke-width="20"/><circle cx="909.3" cy="550.2" r="21.3" stroke-width="18.4"/>
<path d="M957.8 499V580.6" stroke-width="17"/>
<circle cx="1008.7" cy="550.2" r="21.8" stroke-width="18.4"/>
<path d="M1093.2 533.9A21.8 21.8 0 1 0 1093.2 566.5" stroke-width="18.4"/>
<path d="M1111.5 486V580.6" stroke-width="17"/><path d="M1120 528.5H1144.4V580.6" stroke-width="18" stroke-linejoin="miter"/>
<path d="M1238 493.8V507Q1238 526.5 1258 526.5H1271" stroke-width="16"/><path d="M1278.5 493.8V580.6" stroke-width="17"/>
</g><text transform="translate(1160.2 580.6) scale(.93 1)" x="0" y="0" font-family="Liberation Sans, sans-serif" font-weight="700" font-size="121" fill="#6a6ab0">2</text></svg>
</div></body></html>
